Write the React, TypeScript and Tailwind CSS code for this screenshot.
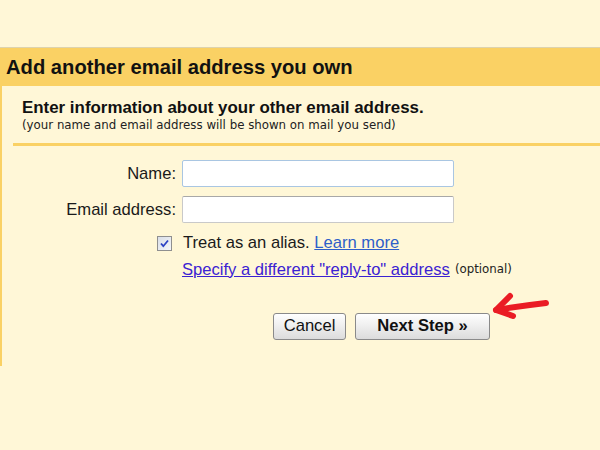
import React from "react";

const font = "font-['Liberation_Sans',Arial,sans-serif]";
const small = "font-['DejaVu_Sans',Verdana,sans-serif]";

function Checkbox() {
  return (
    <span className="flex h-[15px] w-[15px] items-center justify-center border border-[#8f8f8f] bg-gradient-to-br from-[#dadfe8] to-[#f4f5f8]">
      <svg width="11" height="11" viewBox="0 0 11 11">
        <path d="M2 5.5 L4.3 8.2 L9 2.5" fill="none" stroke="#2b41c4" strokeWidth="1.8" />
      </svg>
    </span>
  );
}

function Field({ label, focused }: { label: string; focused?: boolean }) {
  return (
    <>
      <label className="pr-[6px] text-right text-[16.6px] leading-[27px] text-[#1a1a1a]">{label}</label>
      <input
        className={
          "h-[27px] w-[272px] rounded-[2px] border bg-white px-1 text-[14px] outline-none " +
          (focused ? "border-[#a9c6e2]" : "border-[#c9c9c9] border-t-[#a8a8a8]")
        }
      />
    </>
  );
}

function Arrow() {
  return (
    <svg className="absolute left-[488px] top-[290px]" width="66" height="34" viewBox="0 0 66 34">
      <g fill="none" stroke="#ea1c24" strokeWidth="6" strokeLinecap="round" strokeLinejoin="round">
        <path d="M8 20 Q 32 16 58 13" />
        <path d="M22 6 L 8 20 L 25 26" />
      </g>
    </svg>
  );
}

export default function App() {
  return (
    <div className={`relative h-[450px] w-[600px] overflow-hidden bg-[#fff7d7] ${font}`}>
      <div className="h-[48px] border-b border-[#ddd3ae]" />
      <div className="flex h-[38px] items-center bg-[#fad164] pl-[6px]">
        <h1 className="text-[20.2px] font-bold text-[#111]">Add another email address you own</h1>
      </div>
      <div className="h-[280px] border-l-2 border-[#fad164]">
        <div className="pl-[20px] pt-[12px]">
          <div className="text-[16.9px] font-bold leading-[20px] text-[#111]">
            Enter information about your other email address.
          </div>
          <div className={`text-[11.8px] leading-[14px] text-[#222] ${small}`}>
            (your name and email address will be shown on mail you send)
          </div>
        </div>
        <div className="ml-[11px] mt-[11px] h-[3px] bg-[#fad164]" />
        <div className="mt-[14px] grid grid-cols-[180px_auto] gap-y-[9px]">
          <Field label="Name:" focused />
          <Field label="Email address:" />
        </div>
        <div className="mt-[10px] flex h-[20px] items-center">
          <div className="flex w-[174px] justify-end pr-[4px]">
            <Checkbox />
          </div>
          <span className="pl-[7px] text-[16.6px] text-[#1a1a1a]">
            Treat as an alias.{" "}
            <a className="text-[#2e5fc9] underline">Learn more</a>
          </span>
        </div>
        <div className="mt-[7px] flex h-[20px] items-center pl-[180px]">
          <a className="text-[16.6px] text-[#3b22d2] underline">Specify a different "reply-to" address</a>
          <span className={`ml-[5px] text-[11.8px] text-[#222] ${small}`}>(optional)</span>
        </div>
        <div className="mt-[33px] flex gap-[9px] pl-[271px]">
          <button className="h-[27px] w-[73px] rounded-[3px] border border-[#8a8a8a] bg-gradient-to-b from-[#ffffff] to-[#dcdcdc] text-[16.6px] text-[#111]">
            Cancel
          </button>
          <button className="h-[27px] w-[135px] rounded-[3px] border border-[#8a8a8a] bg-gradient-to-b from-[#ffffff] to-[#dcdcdc] text-[16.6px] font-bold text-[#111]">
            Next Step »
          </button>
        </div>
      </div>
      <Arrow />
    </div>
  );
}
